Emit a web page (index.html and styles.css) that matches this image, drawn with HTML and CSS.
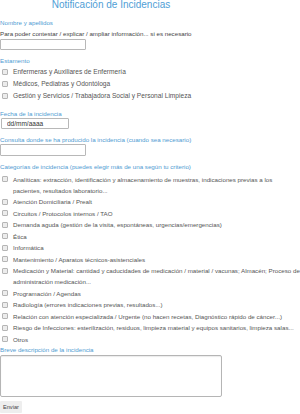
FILE: index.html
```html
<!DOCTYPE html>
<html lang="es">
<head>
  <meta charset="UTF-8" />
  <meta name="viewport" content="width=device-width, initial-scale=1.0"/>
  <title>Notificación de Incidencias</title>
  <link rel="stylesheet" href="styles.css">
</head>
<body>

  <h1 class="title">Notificación de Incidencias</h1>

  <form class="form" onsubmit="return false;">

    <div class="field field-name">
      <label class="label" for="nombre">Nombre y apellidos</label>
      <p class="help">Para poder contestar / explicar / ampliar información... si es necesario</p>
      <input type="text" id="nombre" class="text-input" />
    </div>

    <div class="field field-estamento">
      <span class="label">Estamento</span>
      <label class="option big"><input type="checkbox" class="check" /><span>Enfermeras y Auxiliares de Enfermería</span></label>
      <label class="option big"><input type="checkbox" class="check" /><span>Médicos, Pediatras y Odontóloga</span></label>
      <label class="option big"><input type="checkbox" class="check" /><span>Gestión y Servicios / Trabajadora Social y Personal Limpieza</span></label>
    </div>

    <div class="field field-fecha">
      <label class="label" for="fecha">Fecha de la incidencia</label>
      <input type="text" id="fecha" class="text-input date-input" placeholder="dd/mm/aaaa" />
    </div>

    <div class="field field-consulta">
      <label class="label" for="consulta">Consulta donde se ha producido la incidencia (cuando sea necesario)</label>
      <input type="text" id="consulta" class="text-input tall" />
    </div>

    <div class="field field-categorias">
      <span class="label">Categorías de incidencia (puedes elegir más de una según tu criterio)</span>
      <div class="options">
        <label class="option"><input type="checkbox" class="check" /><span>Analíticas: extracción, identificación y almacenamiento de muestras, indicaciones previas a los pacientes, resultados laboratorio...</span></label>
        <label class="option"><input type="checkbox" class="check" /><span>Atención Domiciliaria / Prealt</span></label>
        <label class="option"><input type="checkbox" class="check" /><span>Circuitos / Protocolos internos / TAO</span></label>
        <label class="option"><input type="checkbox" class="check" /><span>Demanda aguda (gestión de la visita, espontáneas, urgencias/emergencias)</span></label>
        <label class="option"><input type="checkbox" class="check" /><span>Ética</span></label>
        <label class="option"><input type="checkbox" class="check" /><span>Informática</span></label>
        <label class="option"><input type="checkbox" class="check" /><span>Mantenimiento / Aparatos técnicos-asistenciales</span></label>
        <label class="option"><input type="checkbox" class="check" /><span>Medicación y Material: cantidad y caducidades de medicación / material / vacunas; Almacén; Proceso de administración medicación...</span></label>
        <label class="option"><input type="checkbox" class="check" /><span>Programación / Agendas</span></label>
        <label class="option"><input type="checkbox" class="check" /><span>Radiología (errores indicaciones previas, resultados...)</span></label>
        <label class="option"><input type="checkbox" class="check" /><span>Relación con atención especializada / Urgente (no hacen recetas, Diagnóstico rápido de cáncer...)</span></label>
        <label class="option"><input type="checkbox" class="check" /><span>Riesgo de Infecciones: esterilización, residuos, limpieza material y equipos sanitarios, limpieza salas...</span></label>
        <label class="option"><input type="checkbox" class="check" /><span>Otros</span></label>
      </div>
    </div>

    <div class="field field-descripcion">
      <label class="label" for="descripcion">Breve descripción de la incidencia</label>
      <textarea id="descripcion" class="textarea"></textarea>
    </div>

    <button type="submit" class="button">Enviar</button>

  </form>

</body>
</html>
```

FILE: styles.css
```css
body {
  font-family: "Liberation Sans", Arial, sans-serif;
  font-size: 6.2px;
  color: #555;
  background-color: #fff;
  margin: 0;
  padding: 0;
}
.title {
  width: 222px;
  margin: 0;
  font-size: 10px;
  line-height: 10px;
  font-weight: normal;
  text-align: center;
  color: #4f9ed6;
}
.form {
  display: flex;
  flex-direction: column;
  align-items: flex-start;
}
.field {
  display: flex;
  flex-direction: column;
  align-items: flex-start;
}
.label {
  display: block;
  line-height: 8px;
  color: #4f9bd2;
}
.help {
  margin: 3px 0 0 0;
  line-height: 8px;
  color: #444;
}
.text-input {
  box-sizing: border-box;
  width: 86px;
  height: 11px;
  margin: 1px 0 0 0;
  padding: 0 4px;
  border: 1px solid #b8b8b8;
  border-radius: 1px;
  font-family: inherit;
  font-size: 6.2px;
  color: #444;
}
.text-input.tall {
  height: 12px;
  margin-top: 0;
}
.date-input {
  width: 68px;
  margin: 0 0 0 1px;
  padding-left: 5px;
  font-size: 6.5px;
}
.date-input::placeholder {
  color: #333;
}
.field-name {
  margin-top: 9px;
}
.field-estamento {
  margin-top: 7px;
}
.field-estamento .label {
  margin-bottom: 1px;
}
.field-fecha {
  margin-top: 8px;
}
.field-consulta {
  margin-top: 7px;
}
.field-categorias {
  margin-top: 7px;
}
.options {
  display: flex;
  flex-direction: column;
  gap: 0.5px;
  margin-top: 2.5px;
}
.option {
  display: flex;
  align-items: flex-start;
  line-height: 11px;
}
.option.big {
  line-height: 12px;
  font-size: 6.6px;
}
.check {
  appearance: none;
  -webkit-appearance: none;
  box-sizing: border-box;
  flex: none;
  width: 6px;
  height: 6px;
  margin: 2.5px 5px 0 2px;
  border: 1px solid #b5b5b5;
  border-radius: 1px;
  background-color: #ececec;
}
.option.big .check {
  margin-top: 3px;
}
.field-descripcion {
  margin-top: 1.5px;
}
.textarea {
  box-sizing: border-box;
  width: 222px;
  height: 42px;
  margin: 1px 0 0 0;
  border: 1px solid #b5b5b5;
  border-radius: 2px;
  box-shadow: inset 0 1px 1px rgba(0, 0, 0, 0.08);
  resize: none;
}
.button {
  height: 12px;
  margin-top: 4px;
  padding: 0 3px;
  border: none;
  border-radius: 1px;
  background-color: #eee;
  font-family: inherit;
  font-size: 5.6px;
  color: #444;
}
```
